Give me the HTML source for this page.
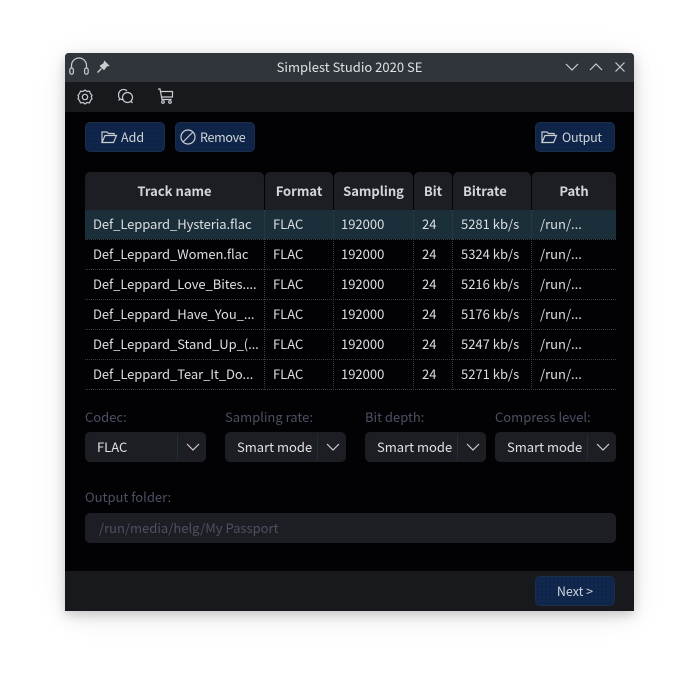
<!DOCTYPE html>
<html><head><meta charset="utf-8">
<style>
html,body{margin:0;padding:0;background:#fff;width:699px;height:688px;overflow:hidden}
*{box-sizing:border-box}
body{font-family:"Noto Sans CJK JP","Liberation Sans",sans-serif;font-size:13px;color:#d6d9dc}
.a{position:absolute;white-space:nowrap}
#win{position:absolute;left:65px;top:53px;width:569px;height:558px;background:#020204;border-radius:4px 4px 0 0;box-shadow:0 4px 10px rgba(0,0,0,.14),0 5px 22px rgba(0,0,0,.08),0 4px 38px rgba(0,0,0,.06)}
.btn{position:absolute;height:30px;background-color:#0f2549;background-image:radial-gradient(#0a1a38 .6px,transparent .8px);background-size:4px 4px;border:1px solid #1c2d4a;border-radius:5px;color:#d0d5d9;line-height:27px;font-size:12.5px}
.th{position:absolute;top:172px;height:38px;background:#1c1e23;border-radius:5px 5px 0 0;text-align:center;font-weight:700;line-height:37px;font-size:13px;color:#d4d7da}
.td{position:absolute;font-size:13px;color:#dcdfe2;line-height:20px;white-space:nowrap}
.n{letter-spacing:-.08px}
.dh{position:absolute;left:85px;width:531px;border-top:1px dotted #3a3d44;height:0}
.dv{position:absolute;top:210px;height:180px;width:0;border-left:1px dotted #3a3d44}
.lb{position:absolute;color:#4c5062;font-size:13px;white-space:nowrap}
.cb{position:absolute;top:432px;width:121px;height:30px;background:#1c1e23;border-radius:5px;font-size:13px;line-height:29px;color:#dfe2e5}
.cb i{position:absolute;right:28px;top:2px;height:26px;border-left:1px solid #1c3038}
.cb svg{position:absolute;right:6px;top:10px}
svg{position:absolute;fill:none;stroke:#c9cdd0;stroke-width:1.2}
</style></head><body>
<div id="win"></div>
<div class="a" style="left:65px;top:53px;width:569px;height:29px;background:#30353b;border-radius:4px 4px 0 0"></div>
<div class="a" style="left:65px;top:82px;width:569px;height:30px;background:#17191d"></div>
<div class="a" style="left:65px;top:571px;width:569px;height:40px;background:#17191d"></div>
<div class="a" style="left:65px;top:58px;width:569px;text-align:center;font-size:13px;line-height:18px;color:#dfe2e4">Simplest Studio 2020 SE</div>

<svg style="left:68px;top:56px" width="22" height="22" viewBox="0 0 22 22" stroke-width="1.4"><path d="M3.5 12V9.5a7.5 7.5 0 0 1 15 0V12"/><rect x="1.8" y="12" width="3.6" height="6.2" rx="1.8"/><rect x="16.6" y="12" width="3.6" height="6.2" rx="1.8"/></svg>
<svg style="left:96px;top:60px" width="14" height="14" viewBox="0 0 14 14"><path d="M1.500 12.500 5.500 8.500" stroke-width="1.4"/><path d="M8.500 1.500 12.500 5.500 10.500 6 8 9.500 4.500 6 8 3.500Z" fill="#c9cdd0"/></svg>

<svg style="left:565px;top:61px" width="14" height="12" viewBox="0 0 14 12"><path d="M1 3 7 9 13 3"/></svg>
<svg style="left:589px;top:61px" width="14" height="12" viewBox="0 0 14 12"><path d="M1 9 7 3 13 9"/></svg>
<svg style="left:614px;top:61px" width="12" height="12" viewBox="0 0 12 12"><path d="M1.500 1.500 10.500 10.500M10.500 1.500 1.500 10.500"/></svg>

<svg style="left:77px;top:89px" width="16" height="16" viewBox="0 0 16 16"><path d="M8 1 10 2.500 12.500 2.200 13.500 4.600 15 6.300 14.300 8 15 9.700 13.500 11.400 12.500 13.800 10 13.500 8 15 6 13.500 3.500 13.800 2.500 11.400 1 9.700 1.700 8 1 6.300 2.500 4.600 3.500 2.200 6 2.500Z"/><circle cx="8" cy="8" r="2.700"/></svg>
<svg style="left:117px;top:88px" width="17" height="17" viewBox="0 0 17 17"><path d="M5.500 11.500H4.500L3 11C1 9 1 4.500 3.500 2.500 5.500 1 8.500 1 10 3M3 11 1.500 12.500"/><circle cx="10.500" cy="9.500" r="5"/><path d="M14 13 15.500 15"/></svg>
<svg style="left:157px;top:88px" width="17" height="17" viewBox="0 0 17 17"><path d="M1 1H3L5 11.500H14.500M3.500 3.500H15.500V9H4.500"/><circle cx="6" cy="14" r="1.300"/><circle cx="13" cy="14" r="1.300"/></svg>

<div class="btn" style="left:85px;top:122px;width:80px"><span class="a" style="left:35px;top:0">Add</span>
<svg style="left:15px;top:7px" width="17" height="14" viewBox="0 0 17 14"><path d="M1 12.500V2H6L7.500 3.500H13V5.500M1 12.500H12.500L15.500 5.500H4L1 12.500Z"/></svg></div>
<div class="btn" style="left:175px;top:122px;width:80px"><span class="a" style="left:24px;top:0;letter-spacing:-.3px">Remove</span>
<svg style="left:4px;top:6px" width="16" height="16" viewBox="0 0 16 16"><circle cx="8" cy="8" r="7"/><path d="M3 13 13 3"/></svg></div>
<div class="btn" style="left:535px;top:122px;width:80px"><span class="a" style="left:26px;top:0;letter-spacing:-.3px">Output</span>
<svg style="left:5px;top:7px" width="17" height="14" viewBox="0 0 17 14"><path d="M1 12.500V2H6L7.500 3.500H13V5.500M1 12.500H12.500L15.500 5.500H4L1 12.500Z"/></svg></div>

<div class="th" style="left:85px;width:179px">Track name</div>
<div class="th" style="left:265px;width:68px">Format</div>
<div class="th" style="left:334px;width:79px">Sampling</div>
<div class="th" style="left:414px;width:38px">Bit</div>
<div class="th" style="left:453px;width:78px;text-align:left;padding-left:10px">Bitrate</div>
<div class="th" style="left:532px;width:84px">Path</div>

<div class="a" style="left:85px;top:210px;width:531px;height:29px;background:#1b2f3b"></div>
<div class="dh" style="top:239px"></div><div class="dh" style="top:269px"></div><div class="dh" style="top:299px"></div><div class="dh" style="top:329px"></div><div class="dh" style="top:359px"></div><div class="dh" style="top:389px"></div>
<div class="dv" style="left:264px"></div><div class="dv" style="left:333px"></div><div class="dv" style="left:413px"></div><div class="dv" style="left:452px"></div><div class="dv" style="left:531px"></div>

<div class="td n" style="left:93px;top:214px">Def_Leppard_Hysteria.flac</div><div class="td" style="left:273px;top:214px">FLAC</div><div class="td" style="left:341px;top:214px">192000</div><div class="td" style="left:422px;top:214px">24</div><div class="td" style="left:461px;top:214px">5281 kb/s</div><div class="td" style="left:540px;top:214px">/run/...</div>
<div class="td n" style="left:93px;top:244px">Def_Leppard_Women.flac</div><div class="td" style="left:273px;top:244px">FLAC</div><div class="td" style="left:341px;top:244px">192000</div><div class="td" style="left:422px;top:244px">24</div><div class="td" style="left:461px;top:244px">5324 kb/s</div><div class="td" style="left:540px;top:244px">/run/...</div>
<div class="td n" style="left:93px;top:274px">Def_Leppard_Love_Bites....</div><div class="td" style="left:273px;top:274px">FLAC</div><div class="td" style="left:341px;top:274px">192000</div><div class="td" style="left:422px;top:274px">24</div><div class="td" style="left:461px;top:274px">5216 kb/s</div><div class="td" style="left:540px;top:274px">/run/...</div>
<div class="td n" style="left:93px;top:304px">Def_Leppard_Have_You_...</div><div class="td" style="left:273px;top:304px">FLAC</div><div class="td" style="left:341px;top:304px">192000</div><div class="td" style="left:422px;top:304px">24</div><div class="td" style="left:461px;top:304px">5176 kb/s</div><div class="td" style="left:540px;top:304px">/run/...</div>
<div class="td n" style="left:93px;top:334px">Def_Leppard_Stand_Up_(...</div><div class="td" style="left:273px;top:334px">FLAC</div><div class="td" style="left:341px;top:334px">192000</div><div class="td" style="left:422px;top:334px">24</div><div class="td" style="left:461px;top:334px">5247 kb/s</div><div class="td" style="left:540px;top:334px">/run/...</div>
<div class="td n" style="left:93px;top:364px">Def_Leppard_Tear_It_Do...</div><div class="td" style="left:273px;top:364px">FLAC</div><div class="td" style="left:341px;top:364px">192000</div><div class="td" style="left:422px;top:364px">24</div><div class="td" style="left:461px;top:364px">5271 kb/s</div><div class="td" style="left:540px;top:364px">/run/...</div>

<div class="lb" style="left:85px;top:407px">Codec:</div>
<div class="lb" style="left:225px;top:407px">Sampling rate:</div>
<div class="lb" style="left:365px;top:407px">Bit depth:</div>
<div class="lb" style="left:495px;top:407px">Compress level:</div>

<div class="cb" style="left:85px"><span class="a" style="left:12px">FLAC</span><i></i><svg width="14" height="10" viewBox="0 0 14 10"><path d="M1 2 7 8 13 2"/></svg></div>
<div class="cb" style="left:225px"><span class="a" style="left:12px">Smart mode</span><i></i><svg width="14" height="10" viewBox="0 0 14 10"><path d="M1 2 7 8 13 2"/></svg></div>
<div class="cb" style="left:365px"><span class="a" style="left:12px">Smart mode</span><i></i><svg width="14" height="10" viewBox="0 0 14 10"><path d="M1 2 7 8 13 2"/></svg></div>
<div class="cb" style="left:495px"><span class="a" style="left:12px">Smart mode</span><i></i><svg width="14" height="10" viewBox="0 0 14 10"><path d="M1 2 7 8 13 2"/></svg></div>

<div class="lb" style="left:85px;top:487px">Output folder:</div>
<div class="a" style="left:85px;top:513px;width:531px;height:30px;background:#1c1e23;border-radius:5px;line-height:29px;padding-left:14px;font-size:13px;color:#4c5062">/run/media/helg/My Passport</div>

<div class="btn" style="left:535px;top:576px;width:80px;text-align:center;background-color:#10274e">Next &gt;</div>
</body></html>
